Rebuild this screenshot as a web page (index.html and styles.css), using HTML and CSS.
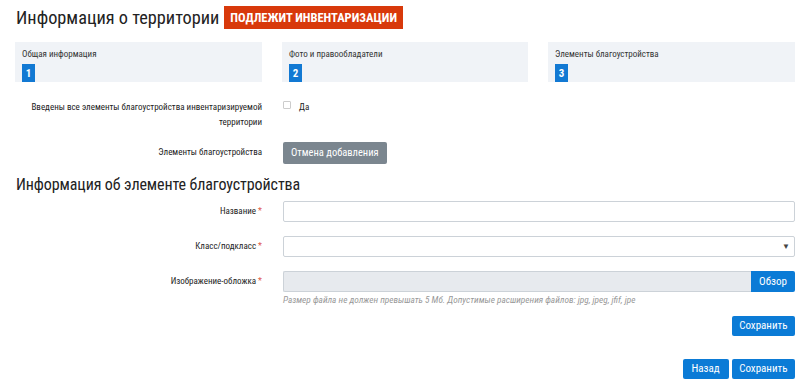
FILE: index.html
```html
<!DOCTYPE html>
<html lang="ru">
<head>
    <meta charset="UTF-8">
    <title>Информация о территории</title>
    <link rel="stylesheet" href="styles.css">
</head>
<body>
    <div class="container">
        <div class="page-header">
            <h1>Информация о территории</h1>
            <span class="status-badge">ПОДЛЕЖИТ ИНВЕНТАРИЗАЦИИ</span>
        </div>

        <div class="steps">
            <div class="step">
                <div class="step-title">Общая информация</div>
                <div class="step-num">1</div>
            </div>
            <div class="step">
                <div class="step-title">Фото и правообладатели</div>
                <div class="step-num">2</div>
            </div>
            <div class="step">
                <div class="step-title">Элементы благоустройства</div>
                <div class="step-num">3</div>
            </div>
        </div>

        <div class="form-row row-check">
            <div class="form-label">Введены все элементы благоустройства инвентаризируемой территории</div>
            <label class="check">
                <span class="check-box"></span>
                Да
            </label>
        </div>

        <div class="form-row row-elements">
            <div class="form-label">Элементы благоустройства</div>
            <div><button class="btn btn-gray">Отмена добавления</button></div>
        </div>

        <h2>Информация об элементе благоустройства</h2>

        <div class="form-row">
            <div class="form-label">Название <span class="req">*</span></div>
            <input class="field" type="text">
        </div>
        <div class="form-row">
            <div class="form-label">Класс/подкласс <span class="req">*</span></div>
            <div class="field select-field"><span class="caret">▼</span></div>
        </div>
        <div class="form-row row-file">
            <div class="form-label">Изображение-обложка <span class="req">*</span></div>
            <div>
                <div class="file-group">
                    <div class="file-path"></div>
                    <button class="btn btn-blue btn-browse">Обзор</button>
                </div>
                <div class="hint">Размер файла не должен превышать 5 Мб. Допустимые расширения файлов: jpg, jpeg, jfif, jpe</div>
            </div>
        </div>

        <div class="actions">
            <button class="btn btn-blue">Сохранить</button>
        </div>
        <div class="actions actions-bottom">
            <button class="btn btn-blue btn-back">Назад</button>
            <button class="btn btn-blue">Сохранить</button>
        </div>
    </div>
</body>
</html>
```

FILE: styles.css
```css
body {
    font-family: "Roboto Condensed", "Liberation Sans Narrow", Roboto, sans-serif;
    margin: 0;
    padding: 6px 8px 0 15px;
    background-color: #fff;
    color: #222;
}
.container {
    width: 780px;
}
.page-header {
    display: flex;
    align-items: center;
    gap: 5px;
}
.page-header h1 {
    margin: 0 0 0 1px;
    font-size: 18.3px;
    font-weight: 400;
}
.status-badge {
    background: #d8390b;
    color: white;
    font-size: 12.5px;
    font-weight: 700;
    height: 23px;
    line-height: 23px;
    padding: 0 6px;
}
.steps {
    display: grid;
    grid-template-columns: 247px 246px 247px;
    justify-content: space-between;
    margin-top: 13px;
}
.step {
    background: #f0f3f7;
    height: 40px;
    padding: 0 7px;
    display: flex;
    flex-direction: column;
    justify-content: flex-end;
}
.step-title {
    font-size: 9px;
    color: #333;
    margin-bottom: 5px;
}
.step-num {
    background: #1279d3;
    color: white;
    font-weight: 700;
    font-size: 11px;
    width: 13px;
    height: 18px;
    line-height: 20px;
    text-align: center;
}
.form-row {
    display: grid;
    grid-template-columns: 247px 1fr;
    column-gap: 21px;
    align-items: center;
    margin-bottom: 14px;
}
.form-label {
    text-align: right;
    font-size: 9px;
    color: #222;
}
.row-check {
    margin-top: 18px;
    align-items: start;
    margin-bottom: 11px;
}
.row-check .form-label {
    line-height: 15px;
}
.check {
    display: flex;
    align-items: flex-start;
    gap: 8px;
    font-size: 9px;
    line-height: 15px;
}
.check-box {
    width: 6px;
    height: 6px;
    border: 1px solid #ccc;
    border-radius: 1px;
    margin-top: 1px;
}
.row-elements {
    margin-bottom: 0;
}
.btn {
    font-family: inherit;
    border: none;
    border-radius: 2px;
    color: white;
    font-size: 11px;
    height: 20px;
    padding: 0 7.5px;
    cursor: pointer;
}
.btn-gray {
    background: #7b868f;
    height: 22px;
    padding: 0 8px;
    font-size: 10.5px;
}
.btn-blue {
    background: #0b7bd6;
}
.btn-back {
    padding: 0 9px;
}
h2 {
    font-size: 16px;
    font-weight: 400;
    letter-spacing: -0.1px;
    margin: 11px 0 7px 1px;
}
.field {
    box-sizing: border-box;
    height: 21px;
    border: 1px solid #ccd2d8;
    border-radius: 2px;
    width: 100%;
    margin: 0;
    background: white;
}
.select-field {
    display: flex;
    align-items: center;
    justify-content: flex-end;
    padding-right: 4px;
}
.caret {
    font-size: 8px;
    color: #444;
}
.row-file {
    align-items: start;
    margin-bottom: 0;
}
.row-file .form-label {
    line-height: 21px;
}
.file-group {
    display: flex;
    height: 21px;
}
.file-path {
    flex: 1;
    background: #e7eaee;
    border: 1px solid #ccd2d8;
    border-right: none;
    border-radius: 2px 0 0 2px;
}
.btn-browse {
    height: 21px;
    border-radius: 0 2px 2px 0;
    width: 44px;
    padding: 0;
}
.hint {
    font-size: 9.3px;
    font-style: italic;
    color: #999;
    margin-top: 2px;
}
.req {
    color: #e05a4a;
}
.actions {
    display: flex;
    justify-content: flex-end;
    gap: 3px;
    margin-top: 11px;
}
.actions-bottom {
    margin-top: 23px;
}
```
